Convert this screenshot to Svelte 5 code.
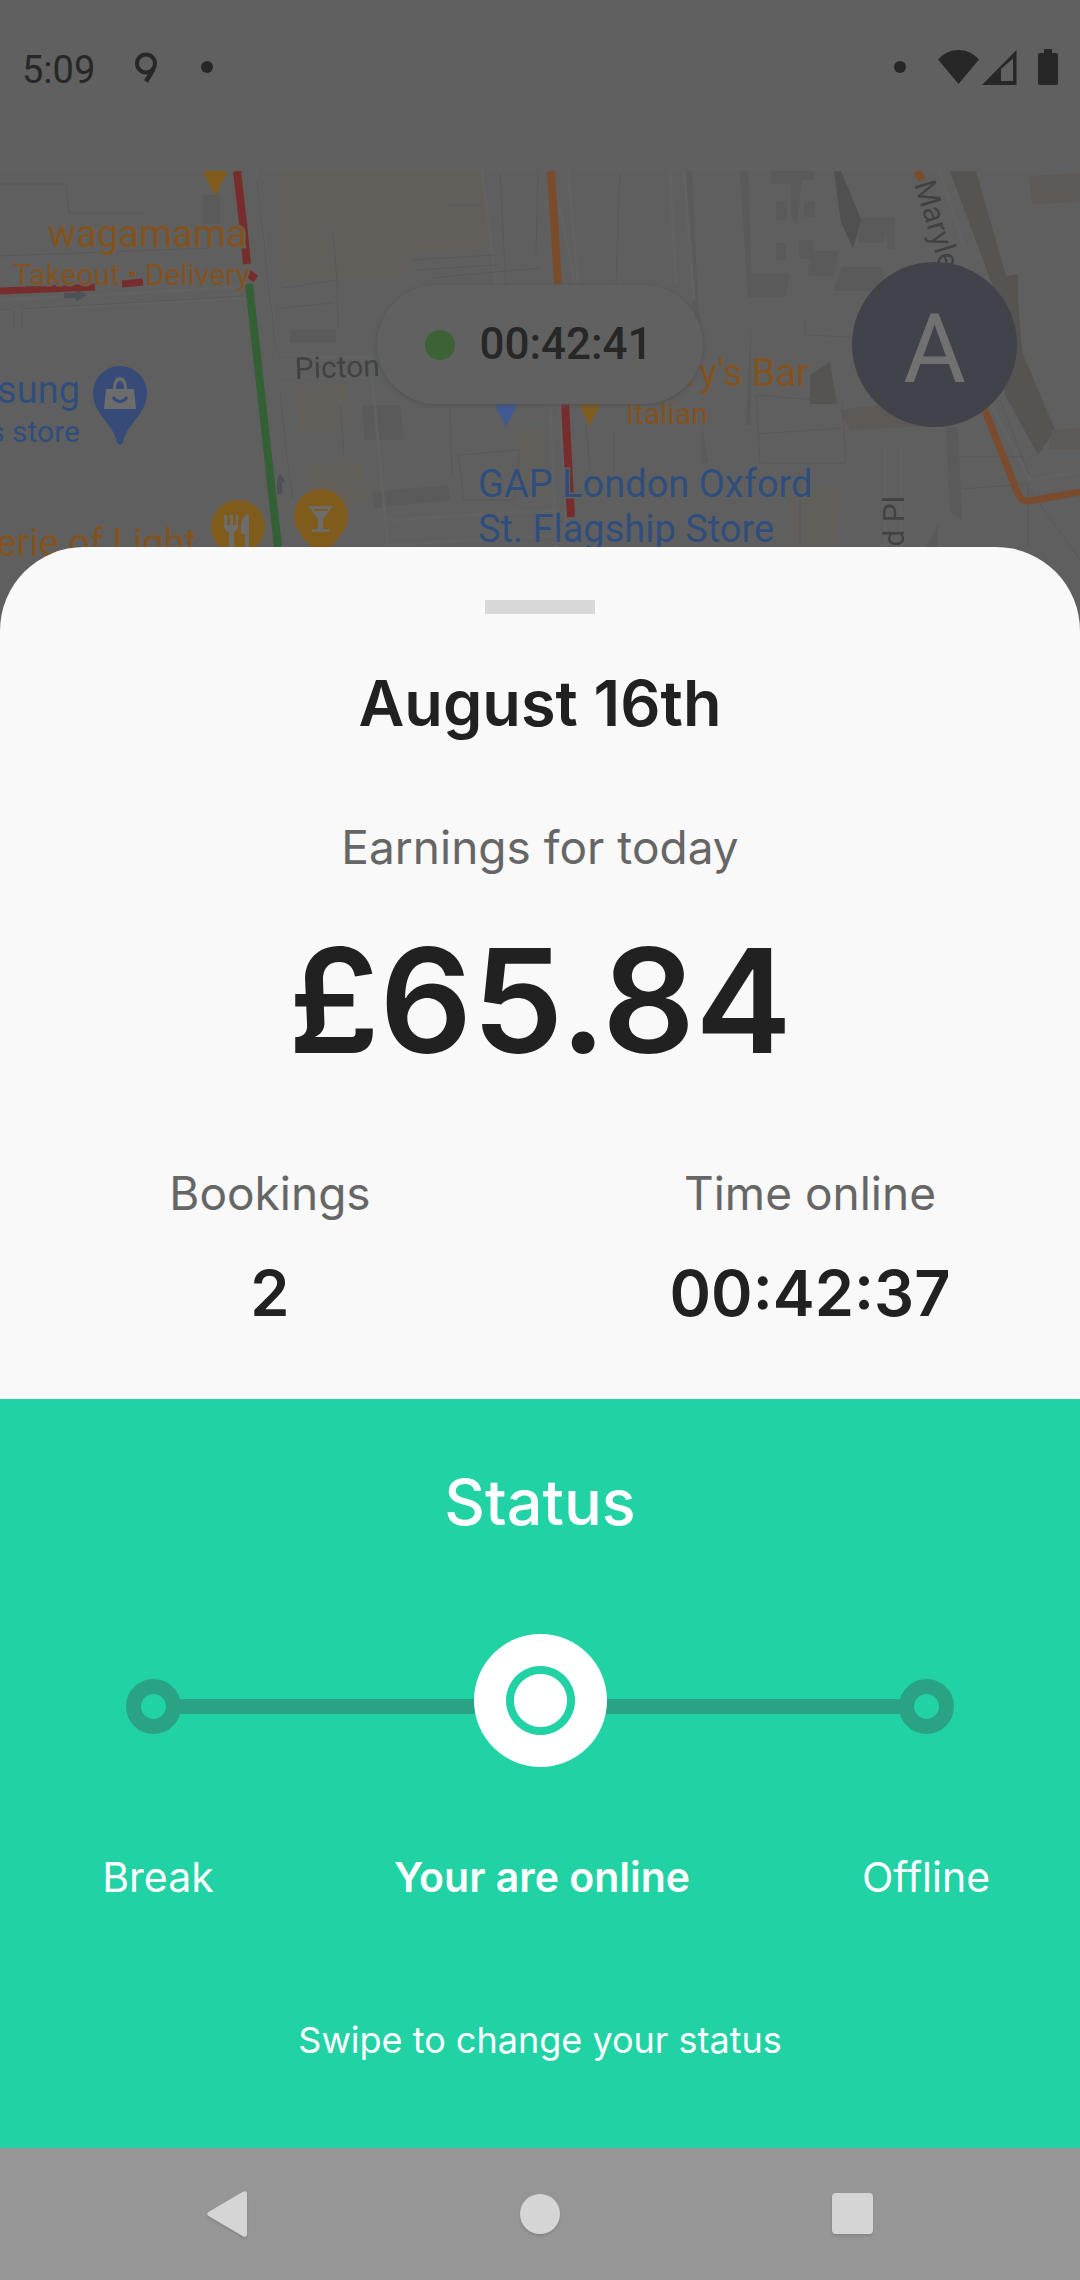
<script>
  let status = $state(1);
  const stats = [
    { label: 'Bookings', value: '2' },
    { label: 'Time online', value: '00:42:37' }
  ];
  const labels = ['Break', 'Your are online', 'Offline'];
</script>

<div class="screen">
  <header class="statusbar">
    <div class="left">
      <span class="clock">5:09</span>
      <svg class="loc" viewBox="0 0 22 31" aria-hidden="true">
        <circle cx="11" cy="11.500" r="9" fill="none" stroke="#272727" stroke-width="4" />
        <path d="M18.500 17 11 29.500" stroke="#272727" stroke-width="4.500" fill="none" />
      </svg>
      <i class="dot"></i>
    </div>
    <div class="right">
      <i class="dot"></i>
      <svg class="signals" viewBox="0 0 120 36" aria-hidden="true">
        <path d="M0 10.500Q8 1 20.500 1T41 10.500L20.500 35Z" />
        <path fill-rule="evenodd" d="M44 36 78.500 1V36ZM63 20V32H75V9.500Z" />
        <path d="M106 0h8v4h4q2 0 2 2v28q0 2-2 2h-16q-2 0-2-2V6q0-2 2-2h4Z" />
      </svg>
    </div>
  </header>

  <section class="map">
    <svg class="canvas" viewBox="0 171 1080 460" preserveAspectRatio="xMidYMin slice" aria-label="Map">
      <rect y="171" width="1080" height="460" fill="#5f5f5f" />
      <g fill="#625f5a">
        <path d="M278 171H482L487 250 410 254V276L357 279 356 277 277 280Z" />
        <path d="M296 386 350 383 353 430 300 434ZM304 465 360 460 372 500 310 506Z" />
        <path d="M514 430H544L546 500 520 480ZM790 490 840 486 834 547H786Z" />
      </g>
      <g fill="#5a5a5a">
        <path d="M203 195H220V224H203ZM740 171H748L752 290 748 297ZM834 171H841L861 220 853 248 841 222Z" />
        <path d="M771 171H814V180H802L797 226 791 215V184H771ZM776 201H787V220H776ZM804 201H815V217H804ZM776 243H786V260H776ZM799 240H813V259H799Z" />
        <path d="M860 217H895V249H888L886 232 884 243H858ZM811 251H839L834 276H808ZM842 267H882L884 291H833Z" />
        <path d="M748 274H790L785 298H748ZM751 322V425H746ZM946 427H958L962 520 950 512ZM938 524V547H926Z" />
        <path d="M686 171H692L698 300 702 342 694 330ZM702 425 708 463H701Z" />
        <path d="M362 405H400L404 440H365ZM372 492 448 485 450 500 374 508ZM290 330H336V343H290Z" />
      </g>
      <path d="M834 171H841L861 220 853 248 841 222Z" fill="#505050" />
      <g fill="#565451">
        <path d="M950 171H976L1006 276 1018 274V300L1022 352 1055 430 1038 455 1005 395 998 300Z" />
        <path d="M810 375 830 362 837 404H810Z" />
      </g>
      <path d="M1029 176 1080 173V202L1032 204ZM840 410 900 402 945 425 850 430ZM1052 430 1080 428V450H1048Z" fill="#5d5956" />
      <g fill="none" stroke="#626262" stroke-width="3">
        <path d="M0 300 250 287M0 311 246 298M256 171 278 357H372M280 377H372L388 547M482 171 496 286M552 171 575 284M568 171 578 284" />
        <path d="M670 171 676 284M684 171 694 300M560 404 568 547M550 404 556 547M940 171 965 250M990 403 1030 480 1080 472M885 446V547M901 446V547M386 520 560 510M386 545 560 535" />
      </g>
      <g fill="none" stroke="#595959" stroke-width="1">
        <path d="M0 184H66L69 213H145M0 256 210 248M0 310H14V327M22 327V309L245 296M257 180 275 340 279 357H296M280 390 286 450 293 500" />
        <path d="M333 235 337 280 283 288M337 280 338 330M282 308 333 303M450 205H482M412 260 495 255M416 270 497 265M430 278 540 268M538 171 536 254M620 171 616 284" />
        <path d="M450 404 452 475M458 455 520 450 514 500H464ZM586 424 590 470M614 430V470M756 395 842 402 846 463H760ZM756 434 842 428M805 320V335L852 337" />
        <path d="M960 457H1024M962 489 1028 484V547M1030 490 1080 560M1000 400 1029 475M500 171 507 310M340 404 344 455M800 470V547" />
      </g>
      <g fill="#4e5156">
        <path d="M64 293H76V289L87 295 76 302V298H64ZM277 494V480L280 473 285 482H282V494Z" />
      </g>
      <g fill="none" stroke-width="8">
        <path d="M237 171 243 223 247 264" stroke="#782d2d" />
        <path d="M0 291 95 287M122 284 143 282" stroke="#782d2d" stroke-width="7" />
        <path d="M246 272 256 279" stroke="#782d2d" />
        <path d="M249 284 278 547" stroke="#336135" />
        <path d="M551 171 558 284" stroke="#7a4c29" />
        <path d="M565 403 569 480 571 517" stroke="#782d2d" />
        <path d="M917 171 922 180" stroke="#7a4c29" />
        <path d="M984 408 1018 494Q1022 502 1029 501L1080 492" stroke="#7a4c2d" stroke-width="7" />
      </g>
      <g fill="#7f5c1c">
        <path d="M203 171H228L218 190 215 196 212 190Z" />
        <path d="M578 402H602L592 420 590 426 587 420Z" />
        <path d="M211 527a27 27 0 1 1 54 0q0 12-12 24h-30q-12-12-12-24Z" />
        <path d="M294 516a27 27 0 1 1 54 0c0 18-16 24-23 42h-8c-7-18-23-24-23-42Z" />
      </g>
      <path d="M493 402H519L509 420 506 427 503 420Z" fill="#405a94" />
      <path d="M93 393a27 27 0 1 1 54 0c0 21-20 30-24 49q-3 6-6 0c-4-19-24-28-24-49Z" fill="#374b78" />
      <g fill="#6c6c6c">
        <path fill-rule="evenodd" d="M106 389H113Q113 377 120 377T127 389H134L136 409H104ZM116 389H124Q124 381 120 381T116 389Z" />
        <path d="M308 506H333L323 519V529H329V532H312V529H318V519Z" />
        <path d="M224 515H227V525H230V515H233V525H236V515H238V526Q238 531 234 532V547H229V532Q224 531 224 526ZM241 525Q242 515 249 514V547H245V534H241Z" />
      </g>
      <path d="M113 397Q120 406 127 397" fill="none" stroke="#374b78" stroke-width="3" />
      <path d="M314 510H328" stroke="#7f5c1c" stroke-width="2" />
      <g class="poi orange">
        <text class="big" x="247" y="247" text-anchor="end">wagamama</text>
        <text x="250" y="285" text-anchor="end">Takeout • Delivery</text>
        <text class="big" x="197" y="556" text-anchor="end">erie of Light</text>
        <text class="big" x="809" y="386" text-anchor="end">ry's Bar</text>
        <text x="626" y="424">Italian</text>
      </g>
      <g class="poi blue">
        <text class="big" x="80" y="403" text-anchor="end">sung</text>
        <text x="80" y="442" text-anchor="end">s store</text>
        <text class="big" x="478" y="497">GAP London Oxford</text>
        <text class="big" x="478" y="542">St. Flagship Store</text>
      </g>
      <g class="poi grey">
        <text x="295" y="379" transform="rotate(-2 295 379)">Picton</text>
        <text transform="translate(914 184) rotate(73)">Maryleb</text>
        <text transform="translate(904 496) rotate(-90)" text-anchor="end">rd Pl</text>
      </g>
    </svg>
    <div class="overlay">
      <div class="pill"><i></i><span>00:42:41</span></div>
      <button class="avatar" aria-label="Account">A</button>
    </div>
  </section>

  <main class="sheet">
    <div class="summary">
      <div class="handle"></div>
      <h1>August 16th</h1>
      <p class="label earn">Earnings for today</p>
      <p class="amount">£65.84</p>
      <dl class="stats">
        {#each stats as s}
          <div>
            <dt class="label">{s.label}</dt>
            <dd>{s.value}</dd>
          </div>
        {/each}
      </dl>
    </div>

    <section class="status">
      <h2 id="status-title">Status</h2>
      <div class="slider">
        <div class="track"><i></i><b></b><i></i></div>
        <input type="range" min="0" max="2" step="1" bind:value={status} aria-labelledby="status-title" />
      </div>
      <div class="labels">
        {#each labels as l, n}
          <span class:active={status === n}>{l}</span>
        {/each}
      </div>
      <p class="hint">Swipe to change your status</p>
    </section>
  </main>

  <nav class="navbar" aria-label="System">
    <button aria-label="Back">
      <svg viewBox="0 0 42 46"><path d="M2.500 21 37 .8Q41 -1 41 3V43Q41 47 37 45.200L2.500 25Q0 23 2.500 21Z" /></svg>
    </button>
    <button aria-label="Home">
      <svg viewBox="0 0 42 46"><circle cx="21" cy="23" r="20" /></svg>
    </button>
    <button aria-label="Recents">
      <svg viewBox="0 0 42 46"><rect y="2" width="41" height="41" rx="4" /></svg>
    </button>
  </nav>
</div>

<style>
  :global(body) {
    margin: 0;
    background: #606060;
  }
  .screen {
    display: flex;
    flex-direction: column;
    min-height: 100vh;
    font-family: Inter, 'Liberation Sans', sans-serif;
    color: #212121;
    background: #606060;
  }
  h1, h2, p, dl, dd {
    margin: 0;
  }
  button {
    border: 0;
    padding: 0;
    background: none;
  }
  .statusbar {
    display: flex;
    justify-content: space-between;
    padding: 45px 22px 82px;
    font-family: Roboto, sans-serif;
    color: #272727;
  }
  .left, .right {
    display: flex;
    align-items: center;
    height: 44px;
  }
  .clock {
    font-size: 38px;
    line-height: 48px;
    padding-top: 6px;
  }
  .loc {
    width: 22px;
    height: 31px;
    margin: 0 44px 0 40px;
  }
  .dot {
    width: 12px;
    height: 12px;
    border-radius: 50%;
    background: #272727;
  }
  .right .dot {
    margin-right: 32px;
  }
  .signals {
    width: 120px;
    height: 36px;
    fill: #272727;
  }
  .map {
    display: grid;
    height: 460px;
  }
  .canvas, .overlay {
    grid-area: 1 / 1;
    width: 100%;
  }
  .canvas {
    height: 460px;
  }
  .poi {
    font-family: Roboto, sans-serif;
    font-size: 30px;
    stroke: #606060;
    stroke-width: 3px;
    paint-order: stroke;
  }
  .big {
    font-size: 38px;
  }
  .orange {
    fill: #82521f;
  }
  .blue {
    fill: #304e7c;
  }
  .grey {
    fill: #424242;
  }
  .overlay {
    display: grid;
    grid-template-columns: 1fr auto 1fr;
    align-items: center;
    align-self: start;
    margin-top: 91px;
  }
  .pill {
    grid-column: 2;
    display: flex;
    align-items: center;
    gap: 24px;
    padding: 33px 50px 33px 48px;
    border-radius: 60px;
    background: #616161;
    box-shadow: 0 1px 4px #525252;
    font: 500 44px/53px Roboto, sans-serif;
    color: #272727;
  }
  .pill i {
    width: 30px;
    height: 30px;
    border-radius: 50%;
    background: #3d6235;
  }
  .avatar {
    box-sizing: border-box;
    justify-self: end;
    width: 165px;
    height: 165px;
    margin-right: 63px;
    padding-top: 8px;
    border-radius: 50%;
    background: #42434a;
    color: #717171;
    font: 400 96px/120px Roboto, sans-serif;
  }
  .sheet {
    position: relative;
    flex: 1;
    display: flex;
    flex-direction: column;
    margin-top: -84px;
    border-radius: 84px 84px 0 0;
    background: #f9f9f9;
    text-align: center;
  }
  .summary {
    padding: 53px 0 66px;
  }
  .handle {
    width: 110px;
    height: 14px;
    margin: 0 auto 49px;
    background: #d8d8d8;
  }
  h1, h2, dd {
    font-size: 63px;
    line-height: 80px;
    font-weight: 600;
  }
  .label {
    font-size: 46px;
    line-height: 60px;
    color: #666;
  }
  .earn {
    margin-top: 74px;
  }
  .amount {
    margin-top: 36px;
    font-size: 145px;
    line-height: 176px;
    font-weight: 600;
  }
  .stats {
    display: grid;
    grid-template-columns: 1fr 1fr;
    margin-top: 74px;
  }
  dd {
    margin-top: 30px;
  }
  .status {
    flex: 1;
    padding: 63px 0 83px;
    background: #20d2a4;
    color: #fff;
  }
  h2 {
    font-weight: 500;
  }
  .slider {
    display: grid;
    margin: 92px 126px 84px;
  }
  .track, input {
    grid-area: 1 / 1;
  }
  .track {
    display: flex;
    align-items: center;
    padding-top: 12px;
  }
  .track i {
    box-sizing: border-box;
    width: 55px;
    height: 55px;
    border: 15px solid #2aa385;
    border-radius: 50%;
  }
  .track b {
    flex: 1;
    height: 15px;
    margin: 0 -2px;
    background: #2aa385;
  }
  input {
    appearance: none;
    width: 100%;
    height: 133px;
    margin: 0;
    background: none;
  }
  input::-webkit-slider-thumb {
    appearance: none;
    width: 133px;
    height: 133px;
    border-radius: 50%;
    background: radial-gradient(circle, #fff 26px, #20d2a4 27px, #20d2a4 34px, #fff 35px);
  }
  .labels {
    display: grid;
    grid-template-columns: 164px 1fr 164px;
    padding: 0 72px 0 76px;
    font-size: 41px;
    line-height: 52px;
  }
  .active {
    font-weight: 600;
  }
  .hint {
    margin-top: 113px;
    font-size: 36px;
    line-height: 48px;
  }
  .navbar {
    display: flex;
    justify-content: space-between;
    padding: 43px 206px;
    background: #969696;
  }
  .navbar svg {
    display: block;
    width: 42px;
    height: 46px;
    fill: #d5d5d5;
    overflow: visible;
    filter: drop-shadow(0 2px 1px #858585);
  }
</style>
